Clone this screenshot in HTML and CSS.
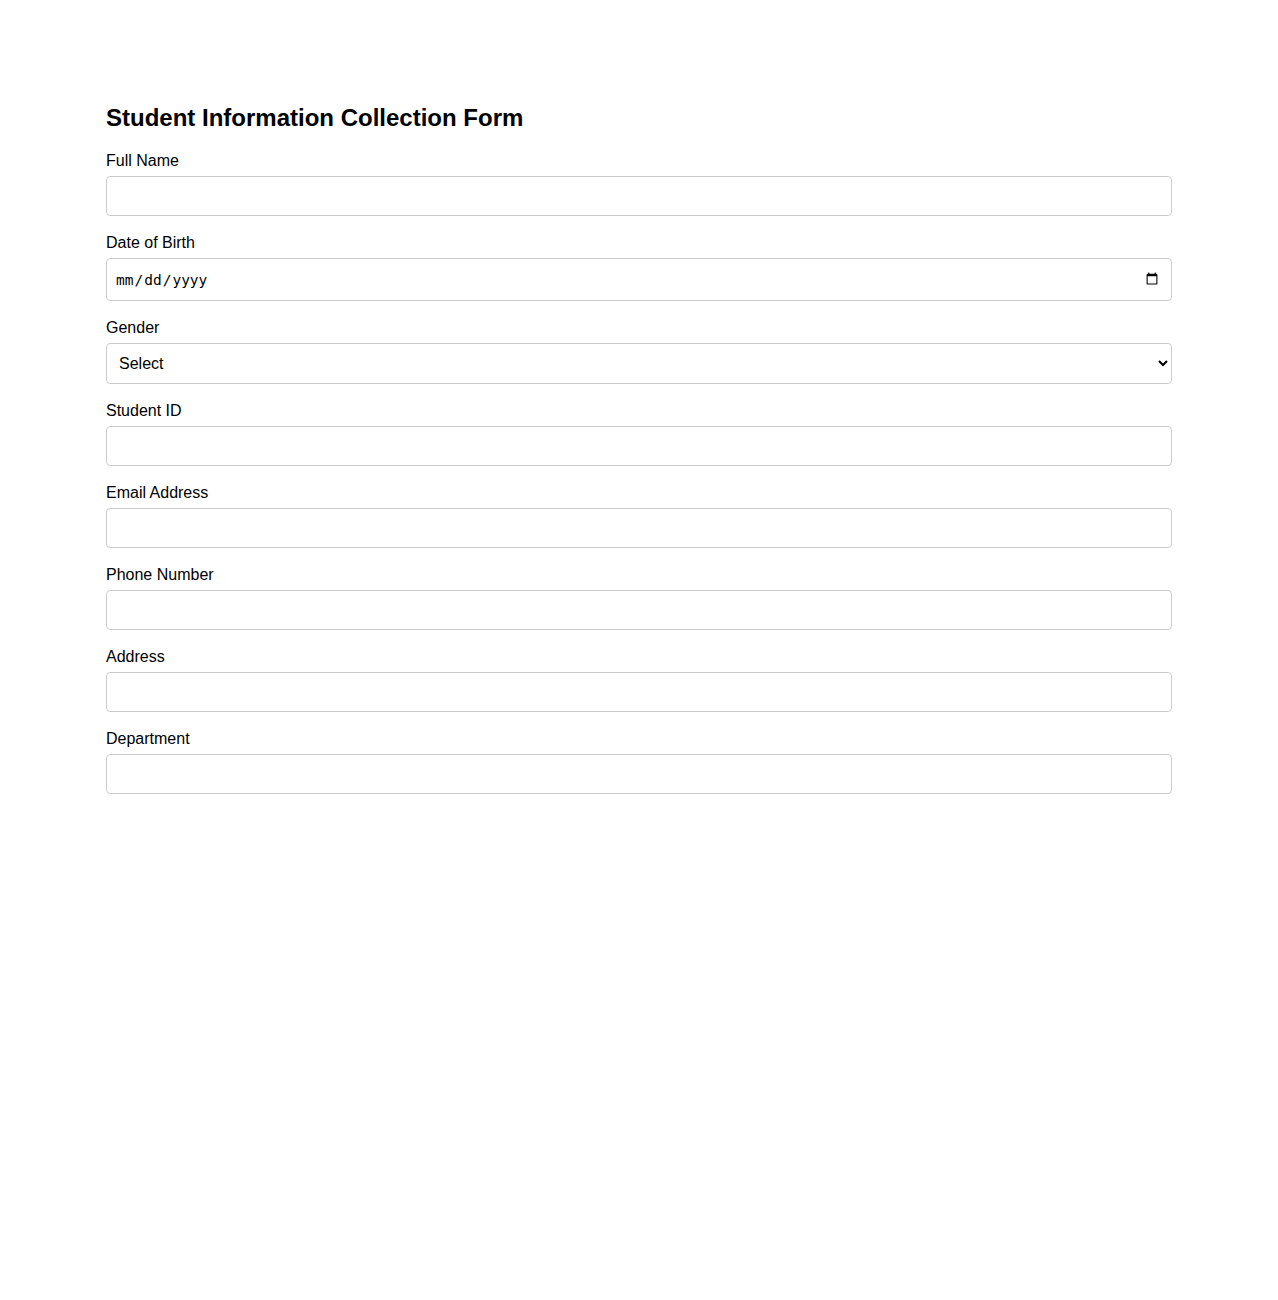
FILE: index.html
```html
<!DOCTYPE html>
<html lang="en">
<head>
<meta charset="utf-8">
<title>Student Information Collection Form</title>
<link rel="stylesheet" href="styles.css">
</head>
<body>
<div class="container">
  <h2 class="title">Student Information Collection Form</h2>
  <form class="form">
    <div class="field">
      <label class="label" for="fullName">Full Name</label>
      <input class="control" type="text" id="fullName">
    </div>
    <div class="field">
      <label class="label" for="dob">Date of Birth</label>
      <input class="control control-date" type="date" id="dob">
    </div>
    <div class="field">
      <label class="label" for="gender">Gender</label>
      <select class="control control-select" id="gender">
        <option>Select</option>
        <option>Male</option>
        <option>Female</option>
        <option>Other</option>
      </select>
    </div>
    <div class="field">
      <label class="label" for="studentId">Student ID</label>
      <input class="control" type="text" id="studentId">
    </div>
    <div class="field">
      <label class="label" for="email">Email Address</label>
      <input class="control" type="email" id="email">
    </div>
    <div class="field">
      <label class="label" for="phone">Phone Number</label>
      <input class="control" type="tel" id="phone">
    </div>
    <div class="field">
      <label class="label" for="address">Address</label>
      <input class="control" type="text" id="address">
    </div>
    <div class="field">
      <label class="label" for="department">Department</label>
      <input class="control" type="text" id="department">
    </div>
  </form>
</div>
</body>
</html>
```

FILE: styles.css
```css
body {
  margin: 0;
  background: #fff;
  font-family: "Liberation Sans", Arial, sans-serif;
  color: #000;
}

.container {
  width: 1066px;
  margin: 0 auto;
  padding-top: 104px;
}

.title {
  margin: 0 0 20px;
  font-size: 24px;
  font-weight: bold;
  line-height: 28px;
}

.field {
  margin-bottom: 18px;
}

.label {
  display: block;
  margin-bottom: 6px;
  font-size: 16px;
  line-height: 18px;
}

.control {
  display: block;
  width: 100%;
  box-sizing: border-box;
  height: 40px;
  padding: 10px;
  border: 1px solid #ccc;
  border-radius: 4px;
  background: #fff;
  font-family: "Liberation Sans", Arial, sans-serif;
  font-size: 16px;
  color: #000;
}

.control-date {
  height: 43px;
  padding-left: 8px;
  font-family: "DejaVu Sans Mono", monospace;
  font-size: 14.5px;
}

.control-select {
  height: 41px;
  padding-left: 8px;
}
```
